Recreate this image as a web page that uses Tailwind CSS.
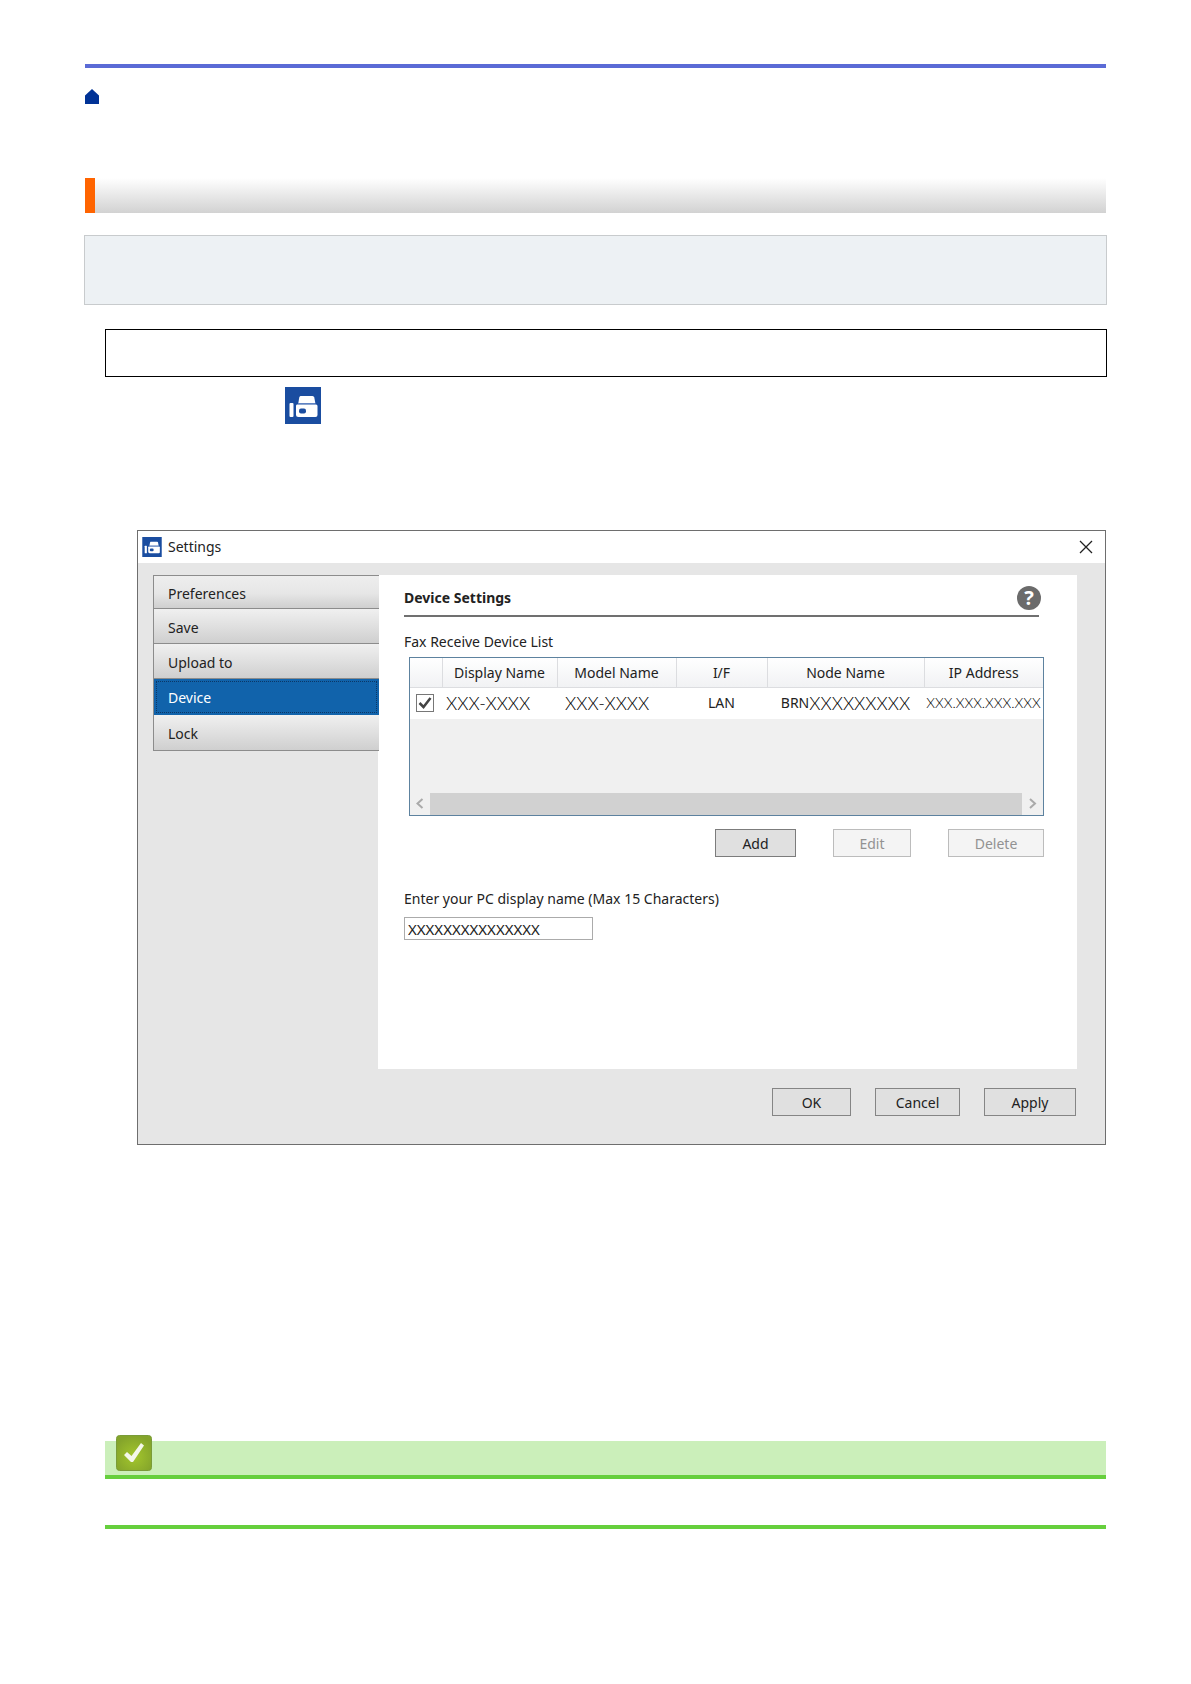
<!DOCTYPE html>
<html lang="en">
<head>
<meta charset="utf-8">
<meta name="viewport" content="width=device-width, initial-scale=1">
<title>Settings</title>
<script src="https://cdn.jsdelivr.net/npm/@tailwindcss/browser@4"></script>
</head>
<body class="bg-white text-[#222] font-['Noto_Sans',sans-serif] text-sm">
<svg class="hidden" aria-hidden="true">
  <symbol id="fax" viewBox="0 0 36 37">
    <rect width="36" height="37" fill="#1a4da0"/>
    <rect x="4.500" y="16" width="4" height="14" rx="1" fill="#fff"/>
    <path d="M15.500 9h12q1.500 0 1.800 1.500l1 5.500h-17l1-5.500q.3-1.500 1.200-1.500z" fill="#fff"/>
    <path d="M12 17.500h19q1.500 0 1.500 1.500v9q0 2-2 2h-17q-2.500 0-2.500-2.500v-8.500q0-1.500 1-1.500z" fill="#fff"/>
    <path d="M13 16.500h17.500" stroke="#5f83c4"/>
    <rect x="14" y="21.500" width="7" height="5" rx="2" fill="#1a4da0"/>
  </symbol>
</svg>

<main class="px-[85px] pt-16 pb-[155px]">
  <header class="border-t-4 border-[#5b6bd6] pt-[21px]">
    <a href="#" aria-label="Home" class="block w-[14px]">
      <svg class="block h-[15px] w-[14px]" viewBox="0 0 14 15"><path d="M0 6.500L7 0l7 6.500V15H0z" fill="#003296"/></svg>
    </a>
  </header>

  <div class="mt-[74px] h-[35px] border-l-10 border-[#ff6400] bg-linear-to-b from-white to-[#d2d2d2]"></div>
  <div class="-mx-px mt-[22px] h-[70px] border border-[#c8cbcd] bg-[#edf1f4]"></div>

  <div class="ml-5">
    <div class="-mr-px mt-6 h-12 border border-black"></div>
    <svg class="mt-[10px] ml-[180px] block h-[37px] w-9"><use href="#fax"/></svg>

    <section class="mt-[106px] ml-8 border border-[#6e6e6e] bg-[#e6e6e6]">
      <div class="flex h-8 items-center bg-white pr-3 pb-px pl-1">
        <svg class="h-5 w-5"><use href="#fax"/></svg>
        <h1 class="ml-[6px] flex-1">Settings</h1>
        <button aria-label="Close" class="block">
          <svg class="block h-[14px] w-[14px]" viewBox="0 0 14 14"><path d="M1 1l12 12M13 1L1 13" stroke="#222" stroke-width="1.300" fill="none"/></svg>
        </button>
      </div>

      <div class="mt-3 mr-7 ml-[15px] flex items-start">
        <nav class="z-10 -mr-px flex w-[226px] flex-col border-t border-l border-[#8c8c8c]">
          <button class="h-[33px] border-b border-[#8c8c8c] bg-linear-to-b from-[#eee] from-0% via-[#e6e6e6] via-55% to-[#cfcfcf] pt-1 pl-[14px] text-left">Preferences</button>
          <button class="h-[35px] border-b border-[#8c8c8c] bg-linear-to-b from-[#f0f0f0] from-0% via-[#e0e0e0] via-50% to-[#cfcfcf] pt-1 pl-[14px] text-left">Save</button>
          <button class="h-[35px] border-b border-[#8c8c8c] bg-linear-to-b from-[#f0f0f0] from-0% via-[#e0e0e0] via-50% to-[#cfcfcf] pt-1 pl-[14px] text-left">Upload to</button>
          <button class="h-9 bg-[#1163ab] pt-[2px] pl-[14px] text-left text-white outline-1 -outline-offset-3 outline-dotted outline-[#0b3766]">Device</button>
          <button class="h-9 border-b border-[#8c8c8c] bg-linear-to-b from-[#f0f0f0] from-0% via-[#e0e0e0] via-50% to-[#cfcfcf] pt-[2px] pl-[14px] text-left">Lock</button>
        </nav>

        <div class="h-[494px] flex-1 bg-white pr-[33px] pl-[26px]">
          <div class="mr-[5px] flex h-[42px] items-center justify-between border-b-2 border-[#707070] pt-[6px]">
            <h2 class="font-bold">Device Settings</h2>
            <button aria-label="Help" class="-mr-[2px] h-6 w-6 rounded-full bg-[#6b6b6b] text-xl leading-6 font-bold text-white">?</button>
          </div>
          <p class="mt-[15px] leading-5">Fax Receive Device List</p>

          <div class="mt-[5px] ml-[5px] flex h-[159px] flex-col border border-[#5d829f] bg-[#f0f0f0]">
            <table class="w-full table-fixed text-center">
              <colgroup><col class="w-8"><col class="w-[115px]"><col class="w-[119px]"><col class="w-[91px]"><col class="w-[157px]"><col></colgroup>
              <thead>
                <tr class="h-[29px] bg-linear-to-b from-white to-[#f1f2f4] whitespace-nowrap">
                  <th class="border-r border-b border-[#dcdde0] p-0"></th>
                  <th class="border-r border-b border-[#dcdde0] pt-[2px] font-normal">Display Name</th>
                  <th class="border-r border-b border-[#dcdde0] pt-[2px] font-normal">Model Name</th>
                  <th class="border-r border-b border-[#dcdde0] pt-[2px] font-normal">I/F</th>
                  <th class="border-r border-b border-[#dcdde0] pt-[2px] font-normal">Node Name</th>
                  <th class="border-b border-[#dcdde0] pt-[2px] font-normal">IP Address</th>
                </tr>
              </thead>
              <tbody>
                <tr class="h-8 bg-white whitespace-nowrap">
                  <td class="p-0">
                    <label class="relative ml-[6px] block h-[18px] w-[18px]">
                      <input type="checkbox" checked aria-label="Receive from this device" class="block h-[18px] w-[18px] appearance-none border border-[#777] bg-white">
                      <svg class="absolute inset-0 h-[18px] w-[18px]" viewBox="0 0 18 18"><path d="M3.500 9l4 4 7-9" stroke="#444" stroke-width="2.500" fill="none"/></svg>
                    </label>
                  </td>
                  <td class="py-0 pr-0 pl-1 text-left font-['Lato'] text-lg font-light text-black">XXX-XXXX</td>
                  <td class="py-0 pr-0 pl-2 text-left font-['Lato'] text-lg font-light text-black">XXX-XXXX</td>
                  <td class="p-0">LAN</td>
                  <td class="p-0"><div class="flex items-center justify-center">BRN<span class="font-['Lato'] text-lg font-light text-black">XXXXXXXXX</span></div></td>
                  <td class="p-0 font-['Lato'] text-sm font-light text-black">XXX.XXX.XXX.XXX</td>
                </tr>
              </tbody>
            </table>
            <div class="mt-auto flex h-[22px] items-center">
              <svg class="h-5 w-5" viewBox="0 0 20 20"><path d="M12.500 5l-5 4.500 5 4.500" stroke="#aaa" stroke-width="2" fill="none"/></svg>
              <div class="h-full flex-1 bg-[#d1d1d1]"></div>
              <svg class="h-5 w-[21px]" viewBox="0 0 21 20"><path d="M8 5l5 4.500-5 4.500" stroke="#aaa" stroke-width="2" fill="none"/></svg>
            </div>
          </div>

          <div class="mt-[13px] flex h-7 justify-end gap-[37px]">
            <button class="w-[81px] border border-[#7c7c7c] bg-[#e0e0e0] pt-[2px]">Add</button>
            <button disabled class="w-[78px] border border-[#bcbcbc] bg-[#f4f4f4] pt-[2px] text-[#929292]">Edit</button>
            <button disabled class="w-[96px] border border-[#bcbcbc] bg-[#f4f4f4] pt-[2px] text-[#929292]">Delete</button>
          </div>

          <label for="pc-name" class="mt-8 block leading-5">Enter your PC display name (Max 15 Characters)</label>
          <input id="pc-name" type="text" maxlength="15" value="XXXXXXXXXXXXXXX" class="mt-2 block h-[23px] w-[189px] border border-[#ababab] bg-white px-[3px] text-[15px]">
        </div>
      </div>

      <div class="mt-[19px] mr-[29px] mb-7 flex h-7 justify-end gap-6">
        <button class="w-[79px] border border-[#858585] bg-[#e0e0e0] pt-[2px]">OK</button>
        <button class="w-[85px] border border-[#858585] bg-[#e0e0e0] pt-[2px]">Cancel</button>
        <button class="w-[92px] border border-[#858585] bg-[#e0e0e0] pt-[2px]">Apply</button>
      </div>
    </section>

    <section class="mt-[296px] border-b-4 border-[#66cf3d]">
      <div class="relative h-[38px] border-b-4 border-[#66cf3d] bg-[#cbefba]">
        <svg class="absolute -top-[6px] left-[11px] h-9 w-9" viewBox="0 0 36 36">
          <defs><radialGradient id="tick-bg" cx=".5" cy=".6" r=".6"><stop offset="0" stop-color="#a3c62c"/><stop offset="1" stop-color="#84a42b"/></radialGradient></defs>
          <rect x=".5" y=".5" width="35" height="35" rx="3" fill="url(#tick-bg)" stroke="#7a9c38"/>
          <path d="M8 20l3-3 4.500 4L25 8l3 2.500L17 27h-2z" fill="#f4f7ea"/>
        </svg>
      </div>
      <div class="h-[46px]"></div>
    </section>
  </div>
</main>
</body>
</html>
